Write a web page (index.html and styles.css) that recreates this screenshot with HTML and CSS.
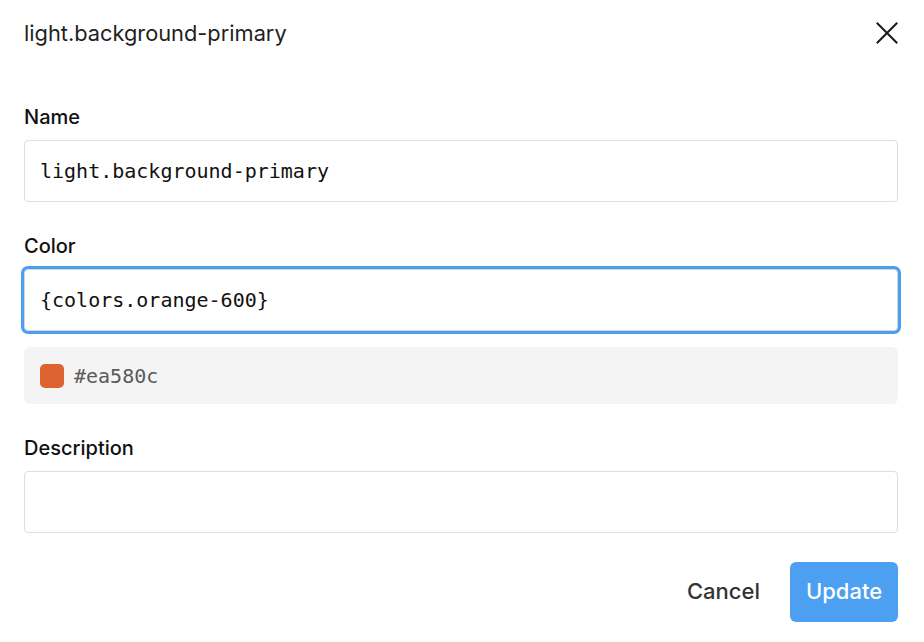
FILE: index.html
```html
<!DOCTYPE html>
<html lang="en">
<head>
<meta charset="utf-8">
<title>Edit token</title>
<link rel="stylesheet" href="styles.css">
</head>
<body>
<div class="dialog">
  <header class="header">
    <h1 class="title">light.background-primary</h1>
    <button class="close" aria-label="Close">
      <svg width="22" height="22" viewBox="0 0 22 22"><path d="M1.5 1.5 L20.5 20.5 M20.5 1.5 L1.5 20.5" stroke="#1a1a1a" stroke-width="2" stroke-linecap="square" fill="none"/></svg>
    </button>
  </header>

  <div class="field field-first">
    <label class="label">Name</label>
    <div class="input">light.background-primary</div>
  </div>

  <div class="field">
    <label class="label">Color</label>
    <div class="input input-focus">{colors.orange-600}</div>
    <div class="resolved">
      <span class="swatch"></span>
      <span class="hex">#ea580c</span>
    </div>
  </div>

  <div class="field">
    <label class="label">Description</label>
    <div class="input"></div>
  </div>

  <footer class="footer">
    <button class="btn btn-cancel">Cancel</button>
    <button class="btn btn-primary">Update</button>
  </footer>
</div>
</body>
</html>
```

FILE: styles.css
```css
html, body {
  margin: 0;
  padding: 0;
  background: #ffffff;
}

body {
  font-family: Inter, "Noto Sans", "Liberation Sans", sans-serif;
  color: #1a1a1a;
}

.dialog {
  display: flex;
  flex-direction: column;
  padding: 21px 26px 0 24px;
}

.header {
  display: flex;
  justify-content: space-between;
  align-items: center;
  height: 24px;
}

.title {
  margin: 0;
  font-size: 21.8px;
  font-weight: 400;
  line-height: 24px;
  color: #1f1f1f;
}

.close {
  border: 0;
  background: none;
  padding: 0;
  width: 22px;
  height: 22px;
  cursor: pointer;
  display: flex;
}

.field {
  display: flex;
  flex-direction: column;
  margin-top: 33px;
}

.field-first {
  margin-top: 61px;
}

.label {
  font-size: 20px;
  font-weight: 500;
  line-height: 22px;
  color: #111;
  margin-bottom: 12px;
}

.input {
  box-sizing: border-box;
  height: 62px;
  border: 1.5px solid #dedede;
  border-radius: 4px;
  padding: 0 15px;
  display: flex;
  align-items: center;
  font-family: "DejaVu Sans Mono", "Liberation Mono", monospace;
  font-size: 20px;
  color: #111;
  background: #fff;
}

.input-focus {
  box-shadow: 0 0 0 3px #4b9ff3;
  border-color: #d6d6d6;
}

.resolved {
  margin-top: 16px;
  height: 57px;
  box-sizing: border-box;
  background: #f4f4f4;
  border-radius: 6px;
  display: flex;
  align-items: center;
  padding-left: 16px;
  gap: 10px;
}

.swatch {
  width: 24px;
  height: 24px;
  border-radius: 5px;
  background: #dd6330;
}

.hex {
  font-family: "DejaVu Sans Mono", "Liberation Mono", monospace;
  font-size: 20px;
  color: #5a5a5a;
}

.footer {
  display: flex;
  justify-content: flex-end;
  align-items: center;
  margin-top: 29px;
}

.btn {
  font-family: Inter, "Noto Sans", "Liberation Sans", sans-serif;
  font-size: 22px;
  font-weight: 500;
  border: 0;
  border-radius: 6px;
  height: 60px;
  line-height: 56px;
  padding-bottom: 4px;
  cursor: pointer;
}

.btn-cancel {
  background: none;
  color: #333;
  padding-left: 16px;
  padding-right: 30px;
}

.btn-primary {
  background: #4d9ff2;
  color: #fff;
  width: 108px;
  padding-left: 0;
  padding-right: 0;
}
```
